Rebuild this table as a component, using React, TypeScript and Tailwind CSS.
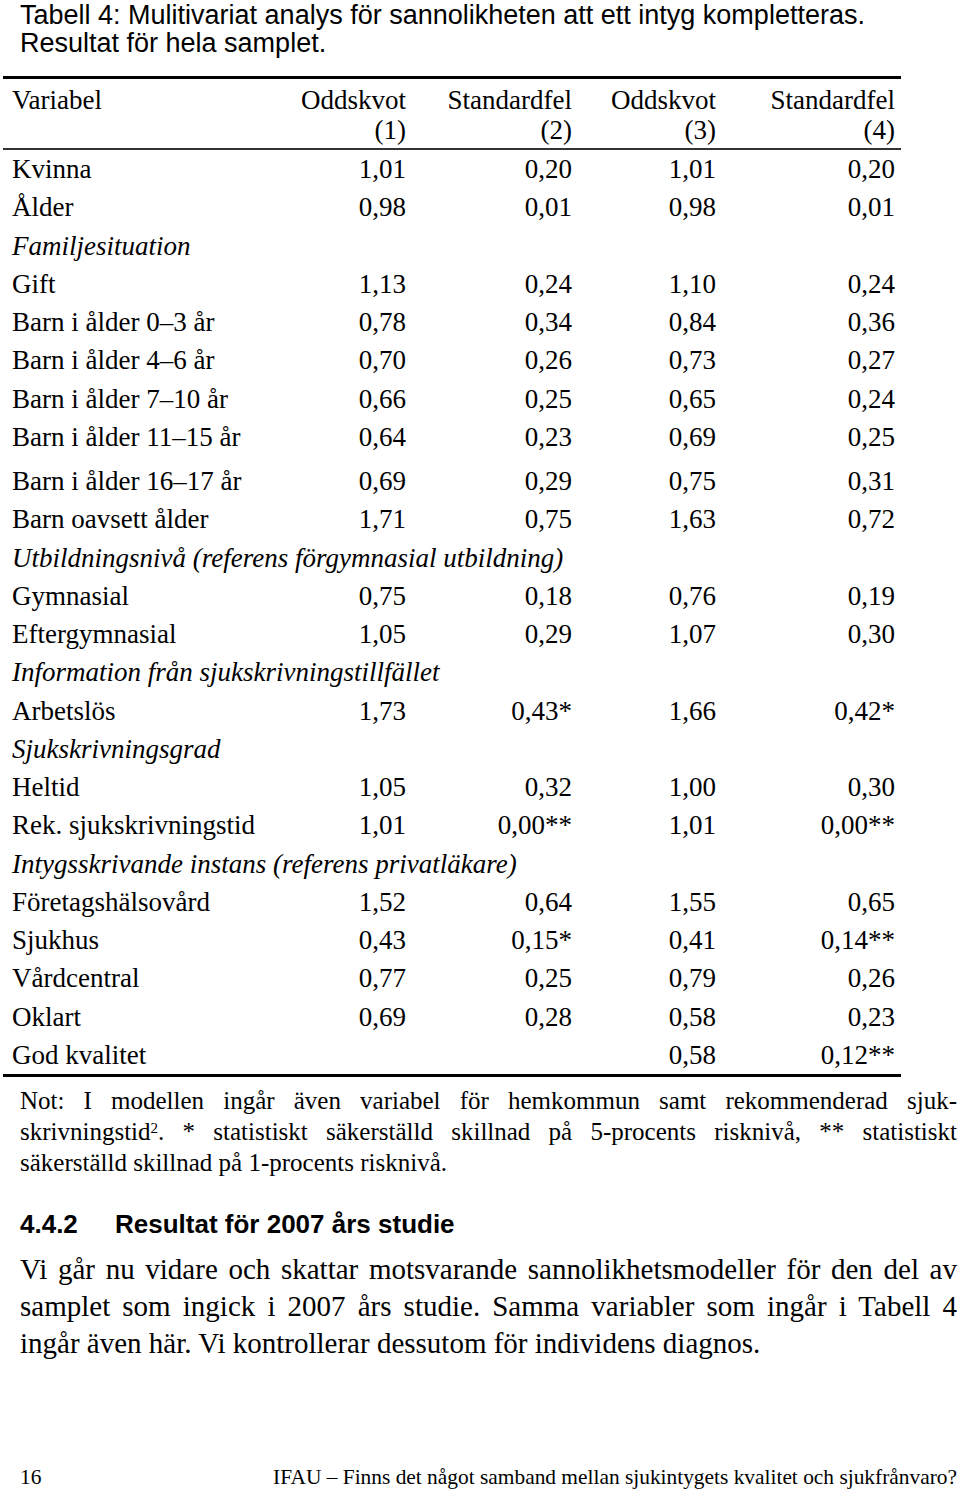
import React from "react"

type Row =
  | { kind: "group"; label: string }
  | { kind: "data"; label: string; values: [string, string, string, string]; gapBefore?: boolean }

const ROWS: Row[] = [
  { kind: "data", label: "Kvinna", values: ["1,01", "0,20", "1,01", "0,20"] },
  { kind: "data", label: "Ålder", values: ["0,98", "0,01", "0,98", "0,01"] },
  { kind: "group", label: "Familjesituation" },
  { kind: "data", label: "Gift", values: ["1,13", "0,24", "1,10", "0,24"] },
  { kind: "data", label: "Barn i ålder 0–3 år", values: ["0,78", "0,34", "0,84", "0,36"] },
  { kind: "data", label: "Barn i ålder 4–6 år", values: ["0,70", "0,26", "0,73", "0,27"] },
  { kind: "data", label: "Barn i ålder 7–10 år", values: ["0,66", "0,25", "0,65", "0,24"] },
  { kind: "data", label: "Barn i ålder 11–15 år", values: ["0,64", "0,23", "0,69", "0,25"] },
  { kind: "data", label: "Barn i ålder 16–17 år", values: ["0,69", "0,29", "0,75", "0,31"], gapBefore: true },
  { kind: "data", label: "Barn oavsett ålder", values: ["1,71", "0,75", "1,63", "0,72"] },
  { kind: "group", label: "Utbildningsnivå (referens förgymnasial utbildning)" },
  { kind: "data", label: "Gymnasial", values: ["0,75", "0,18", "0,76", "0,19"] },
  { kind: "data", label: "Eftergymnasial", values: ["1,05", "0,29", "1,07", "0,30"] },
  { kind: "group", label: "Information från sjukskrivningstillfället" },
  { kind: "data", label: "Arbetslös", values: ["1,73", "0,43*", "1,66", "0,42*"] },
  { kind: "group", label: "Sjukskrivningsgrad" },
  { kind: "data", label: "Heltid", values: ["1,05", "0,32", "1,00", "0,30"] },
  { kind: "data", label: "Rek. sjukskrivningstid", values: ["1,01", "0,00**", "1,01", "0,00**"] },
  { kind: "group", label: "Intygsskrivande instans (referens privatläkare)" },
  { kind: "data", label: "Företagshälsovård", values: ["1,52", "0,64", "1,55", "0,65"] },
  { kind: "data", label: "Sjukhus", values: ["0,43", "0,15*", "0,41", "0,14**"] },
  { kind: "data", label: "Vårdcentral", values: ["0,77", "0,25", "0,79", "0,26"] },
  { kind: "data", label: "Oklart", values: ["0,69", "0,28", "0,58", "0,23"] },
  { kind: "data", label: "God kvalitet", values: ["", "", "0,58", "0,12**"] },
]

const GRID = "grid grid-cols-[250px_153px_166px_144px_179px]"

export default function App() {
  return (
    <div className="w-[960px] h-[1494px] bg-white text-black overflow-hidden">
      {/* caption */}
      <div className="pt-[1px] pl-[20px] font-['Liberation_Sans',Arial,sans-serif] text-[27px] leading-[28px]">
        <div>Tabell 4: Mulitivariat analys för sannolikheten att ett intyg kompletteras.</div>
        <div>Resultat för hela samplet.</div>
      </div>

      {/* table */}
      <div className="mt-[19px] ml-[3px] w-[898px] font-['Liberation_Serif','Times_New_Roman',serif] text-[27px]">
        <div className="h-[3px] bg-black" />
        <div className={`${GRID} pt-[6px] pb-[3px] leading-[30px]`}>
          <div className="pl-[9px]">Variabel</div>
          <HeadCell top="Oddskvot" bottom="(1)" />
          <HeadCell top="Standardfel" bottom="(2)" />
          <HeadCell top="Oddskvot" bottom="(3)" />
          <HeadCell top="Standardfel" bottom="(4)" />
        </div>
        <div className="h-[2px] bg-[#333]" />
        {ROWS.map((row, i) =>
          row.kind === "group" ? (
            <div key={i} className="h-[38.25px] leading-[38.25px] pl-[9px] italic">
              {row.label}
            </div>
          ) : (
            <div
              key={i}
              className={`${GRID} h-[38.25px] leading-[38.25px] ${row.gapBefore ? "mt-[6px]" : ""}`}
            >
              <div className="pl-[9px] whitespace-nowrap">{row.label}</div>
              {row.values.map((v, j) => (
                <div key={j} className="text-right">
                  {v}
                </div>
              ))}
            </div>
          )
        )}
        <div className="h-[3px] bg-black" />
      </div>

      {/* note */}
      <p className="mt-[8px] pl-[20px] pr-[3px] font-['Liberation_Serif','Times_New_Roman',serif] text-[25px] leading-[31px] text-justify">
        Not: I modellen ingår även variabel för hemkommun samt rekommenderad sjuk-skrivningstid
        <sup className="text-[15px] leading-none">2</sup>. * statistiskt säkerställd skillnad på 5-procents
        risknivå, ** statistiskt säkerställd skillnad på 1-procents risknivå.
      </p>

      {/* section heading */}
      <h2 className="mt-[31px] pl-[20px] font-['Liberation_Sans',Arial,sans-serif] font-bold text-[26px] leading-[30px] flex">
        <span className="w-[95px]">4.4.2</span>
        <span>Resultat för 2007 års studie</span>
      </h2>

      <p className="mt-[12px] pl-[20px] pr-[3px] font-['Liberation_Serif','Times_New_Roman',serif] text-[29px] leading-[37px] text-justify">
        Vi går nu vidare och skattar motsvarande sannolikhetsmodeller för den del av samplet som ingick i 2007 års
        studie. Samma variabler som ingår i Tabell 4 ingår även här. Vi kontrollerar dessutom för individens
        diagnos.
      </p>

      {/* footer */}
      <div className="mt-[102px] pl-[20px] pr-[3px] flex justify-between font-['Liberation_Serif','Times_New_Roman',serif] text-[21.4px] leading-[26px]">
        <span>16</span>
        <span>IFAU – Finns det något samband mellan sjukintygets kvalitet och sjukfrånvaro?</span>
      </div>
    </div>
  )
}

function HeadCell({ top, bottom }: { top: string; bottom: string }) {
  return (
    <div className="text-right">
      <div>{top}</div>
      <div>{bottom}</div>
    </div>
  )
}
